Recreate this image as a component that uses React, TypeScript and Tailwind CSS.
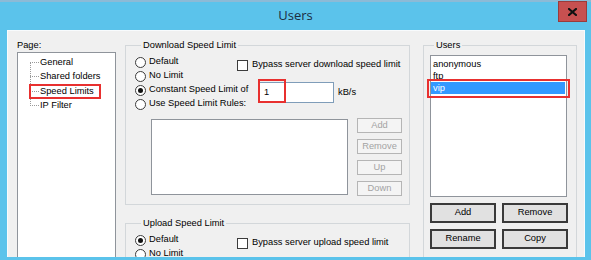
import React from 'react';

const Radio = ({ label, checked }: { label: string; checked?: boolean }) => (
  <div className="flex items-center h-[14px] gap-[3px] whitespace-nowrap">
    <span className="w-[11px] h-[11px] rounded-full border border-[#3c3c3c] bg-white flex items-center justify-center shrink-0">
      {checked && <span className="w-[5px] h-[5px] rounded-full bg-[#111]"></span>}
    </span>
    <span className="leading-none">{label}</span>
  </div>
);

const Check = ({ label }: { label: string }) => (
  <div className="flex items-center h-[14px] gap-[4px] whitespace-nowrap">
    <span className="w-[11px] h-[11px] border border-[#3c3c3c] bg-white shrink-0"></span>
    <span className="leading-none">{label}</span>
  </div>
);

const DisabledBtn = ({ label }: { label: string }) => (
  <div className="h-[15px] w-[45px] border border-[#b5b5b5] bg-[#f4f4f4] text-[#a3a3a3] flex items-center justify-center">
    {label}
  </div>
);

const Btn = ({ label }: { label: string }) => (
  <div className="h-[20px] border-2 border-[#3a3a3a] bg-[#e1e1e1] flex items-center justify-center">
    {label}
  </div>
);

export default function App() {
  return (
    <div className="w-[591px] h-[260px] bg-[#5bc3eb] overflow-hidden flex flex-col font-['Liberation_Sans',Arial,sans-serif] text-[9.3px] text-black">
      {/* Title bar */}
      <div className="relative h-[30px] shrink-0 flex items-center justify-center border-t-2 border-[#8cbad6]">
        <span className="text-[13px] font-['Open_Sans',sans-serif] text-[#1b2d42]">Users</span>
        <div className="absolute right-[4px] top-[-1px] w-[29px] h-[21px] bg-[#c75050] border border-[#9a3b3b] flex items-center justify-center">
          <svg width="9" height="8" viewBox="0 0 9 8">
            <path d="M1 1 L8 7 M8 1 L1 7" stroke="#111" strokeWidth="2.2" strokeLinecap="square" />
          </svg>
        </div>
      </div>

      {/* Body */}
      <div className="ml-[7px] mr-[6px] h-[227px] shrink-0 bg-[#f0f0f0] border-t border-l border-r border-[#f8fbfd] overflow-hidden flex items-start">
        {/* Page tree */}
        <div className="ml-[9px] mt-[8px] flex flex-col">
          <span className="h-[12px] leading-[12px]">Page:</span>
          <div className="relative mt-[1px] w-[99px] h-[210px] bg-white border border-[#8f949b] pt-[2px]">
            <div className="absolute left-[12px] top-[9px] h-[44px] border-l border-dotted border-[#9a9a9a]"></div>
            {['General', 'Shared folders', 'Speed Limits', 'IP Filter'].map((t) => (
              <div key={t} className="flex items-center h-[14.5px] pl-[12px]">
                <span className="w-[9px] border-t border-dotted border-[#9a9a9a]"></span>
                <span className="ml-[1px] leading-none">{t}</span>
              </div>
            ))}
            <div className="absolute left-[11px] top-[31px] w-[72px] h-[15px] border-2 border-[#e8302f]"></div>
          </div>
        </div>

        {/* Speed limit groups */}
        <div className="ml-[9px] mt-[8px] w-[285px] flex flex-col">
          <fieldset className="border border-[#d3d7da] pb-[8px] pl-[9px]">
            <legend className="ml-[6px] px-[2px] h-[12px] leading-[12px]">Download Speed Limit</legend>
            <div className="flex pt-[4px]">
              <div className="w-[102px] shrink-0 flex flex-col">
                <Radio label="Default" />
                <Radio label="No Limit" />
                <Radio label="Constant Speed Limit of" checked />
                <Radio label="Use Speed Limit Rules:" />
              </div>
              <div className="flex flex-col pt-[3px]">
                <Check label="Bypass server download speed limit" />
                <div className="flex items-center mt-[10px] ml-[21px]">
                  <div className="relative w-[76px] h-[21px] bg-white border border-[#7f9db9] flex items-center pl-[5px]">
                    1
                    <div className="absolute left-[-1px] top-[-4px] w-[28px] h-[24px] border-2 border-[#e8302f]"></div>
                  </div>
                  <span className="ml-[4px]">kB/s</span>
                </div>
              </div>
            </div>
            <div className="flex mt-[7px]">
              <div className="ml-[16px] mt-[1px] w-[197px] h-[76px] bg-white border border-[#8f949b]"></div>
              <div className="ml-[9px] flex flex-col gap-[6px]">
                <DisabledBtn label="Add" />
                <DisabledBtn label="Remove" />
                <DisabledBtn label="Up" />
                <DisabledBtn label="Down" />
              </div>
            </div>
          </fieldset>

          <fieldset className="mt-[12px] border border-[#d3d7da] pl-[9px] pb-[20px]">
            <legend className="ml-[6px] px-[2px] h-[12px] leading-[12px]">Upload Speed Limit</legend>
            <div className="flex pt-[4px]">
              <div className="w-[102px] shrink-0 flex flex-col">
                <Radio label="Default" checked />
                <Radio label="No Limit" />
              </div>
              <div className="flex flex-col pt-[3px]">
                <Check label="Bypass server upload speed limit" />
              </div>
            </div>
          </fieldset>
        </div>

        {/* Users group */}
        <fieldset className="ml-[13px] mt-[8px] w-[154px] border border-[#d3d7da] pl-[6px] pb-[20px]">
          <legend className="ml-[4px] px-[2px] h-[12px] leading-[12px]">Users</legend>
          <div className="pt-[4px]">
            <div className="relative w-[137px] h-[142px] bg-white border border-[#8f949b] pt-[2px]">
              <div className="h-[12px] leading-[12px] pl-[2px]">anonymous</div>
              <div className="h-[12px] leading-[12px] pl-[2px]">ftp</div>
              <div className="h-[12px] leading-[12px] pl-[2px] mr-[1px] bg-[#3399ff] text-white">vip</div>
              <div className="absolute left-[-4px] top-[23px] w-[143px] h-[19px] border-2 border-[#e8302f]"></div>
            </div>
            <div className="mt-[6px] w-[138px] grid grid-cols-2 gap-x-[6px] gap-y-[6px]">
              <Btn label="Add" />
              <Btn label="Remove" />
              <Btn label="Rename" />
              <Btn label="Copy" />
            </div>
          </div>
        </fieldset>
      </div>
    </div>
  );
}
